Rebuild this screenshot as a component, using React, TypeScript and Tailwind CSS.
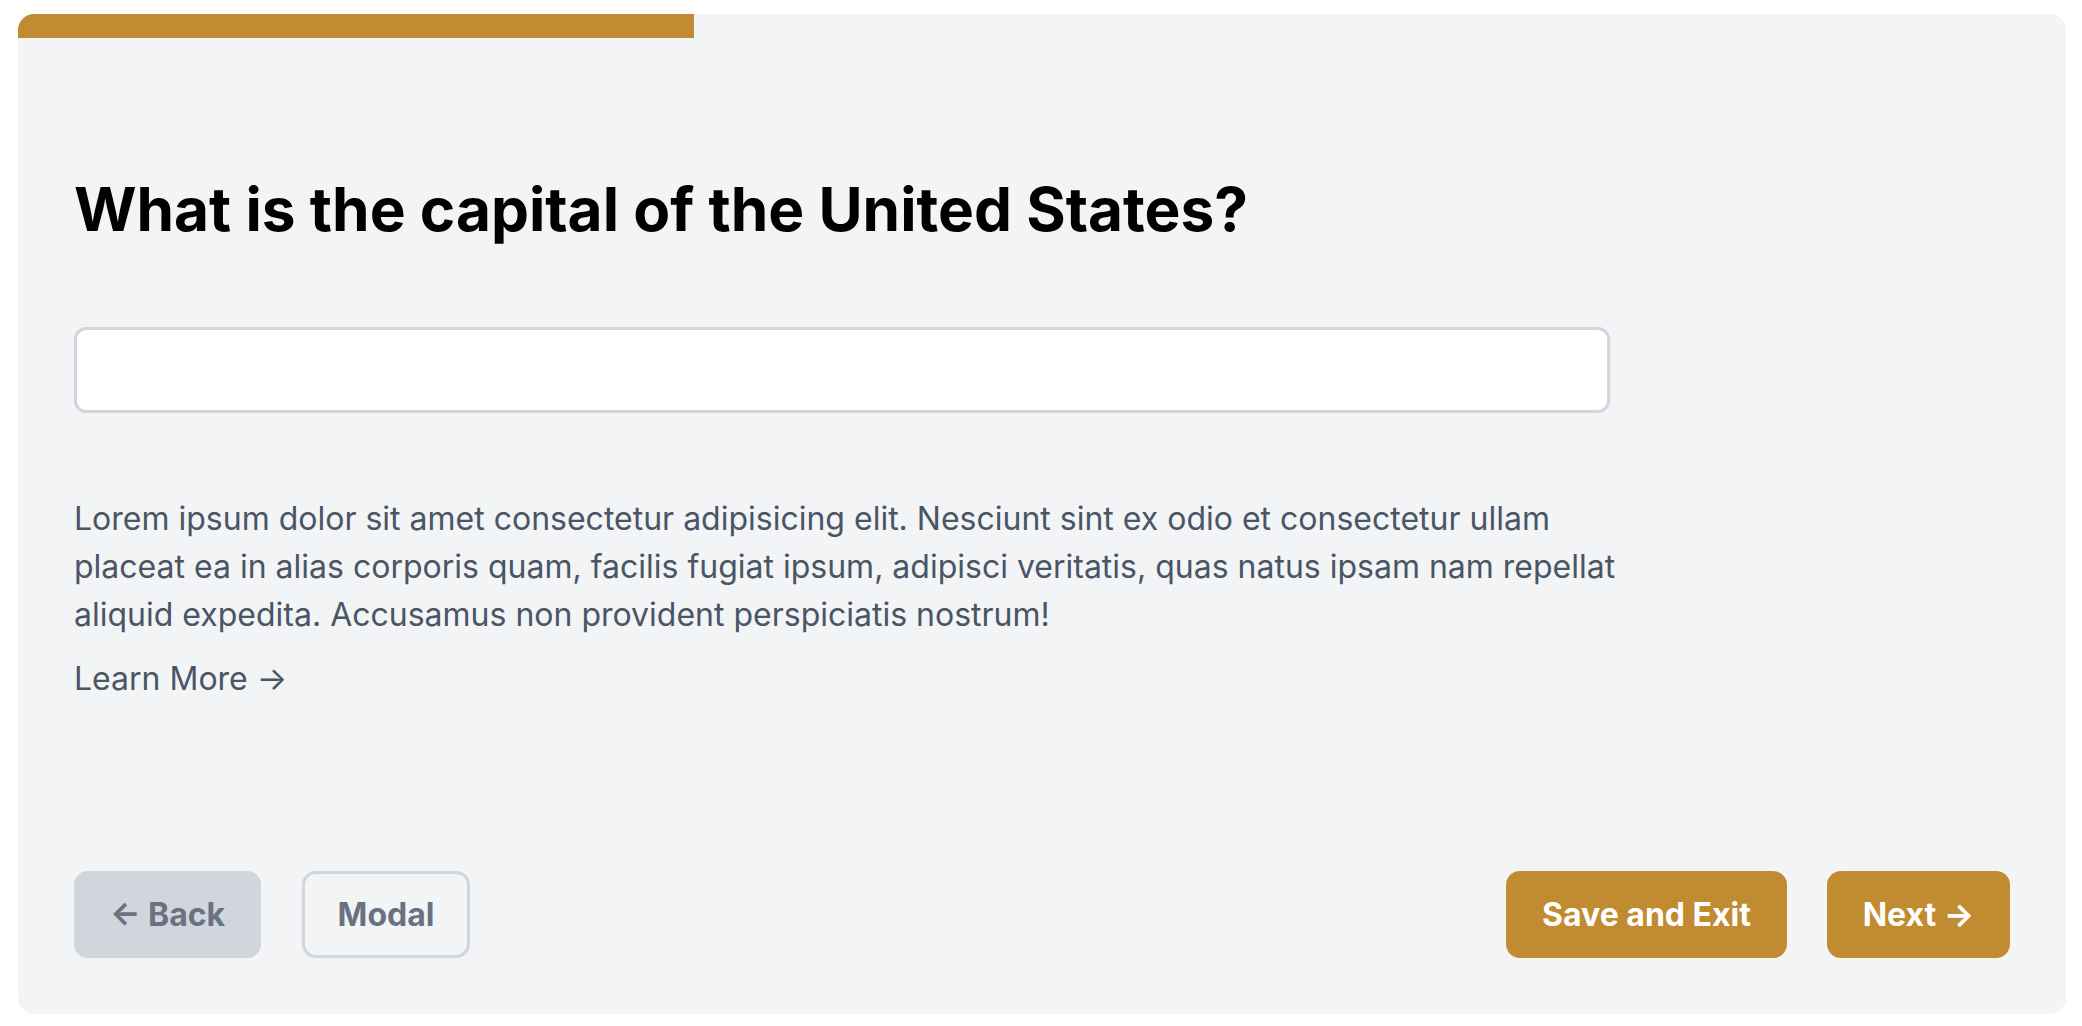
import React from "react";

export default function App() {
  return (
    <div
      className="min-h-screen bg-white pl-[18px] pr-[16px] pt-[14px]"
      style={{ fontFamily: "Inter, 'Noto Sans', sans-serif" }}
    >
      <div className="flex h-[1000px] flex-col overflow-hidden rounded-[16px] bg-[#f3f4f6]">
        <div className="h-6 w-[33%] shrink-0 bg-[#c18b31]" />
        <div className="flex flex-1 flex-col px-14 pb-14 pt-[142px]">
          <h1 className="text-[60.3px] font-bold leading-none text-black">
            What is the capital of the United States?
          </h1>
          <input
            type="text"
            className="mt-[87px] h-[86px] w-full max-w-[1536px] rounded-xl border-[3px] border-gray-300 bg-white px-5 text-[32px] outline-none"
          />
          <p className="mt-[82px] max-w-[1548px] text-[32px] leading-[48px] text-gray-600">
            Lorem ipsum dolor sit amet consectetur adipisicing elit. Nesciunt sint ex odio et consectetur
            ullam placeat ea in alias corporis quam, facilis fugiat ipsum, adipisci veritatis, quas natus
            ipsam nam repellat aliquid expedita. Accusamus non provident perspiciatis nostrum!
          </p>
          <a href="#" className="mt-4 self-start text-[32px] leading-[48px] text-gray-600">
            Learn More →
          </a>
          <div className="mt-auto flex items-center justify-between">
            <div className="flex items-center gap-[41px]">
              <button className="flex h-[87px] w-[187px] items-center justify-center rounded-[14px] bg-gray-300 text-[32px] font-bold text-gray-500">
                ← Back
              </button>
              <button className="flex h-[87px] w-[168px] items-center justify-center rounded-[14px] border-[3px] border-gray-300 text-[32px] font-bold text-gray-500">
                Modal
              </button>
            </div>
            <div className="flex items-center gap-10">
              <button className="flex h-[87px] w-[281px] items-center justify-center rounded-[14px] bg-[#c18b31] text-[32px] font-bold text-white">
                Save and Exit
              </button>
              <button className="flex h-[87px] w-[183px] items-center justify-center rounded-[14px] bg-[#c18b31] text-[32px] font-bold text-white">
                Next →
              </button>
            </div>
          </div>
        </div>
      </div>
    </div>
  );
}
